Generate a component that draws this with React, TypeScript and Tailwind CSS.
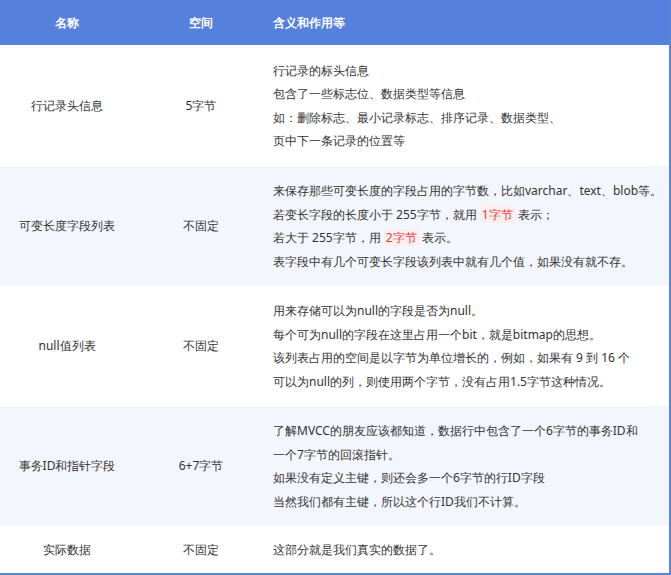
const rows: { name: string; size: string; lines: React.ReactNode[]; h: string; bg: string }[] = [
  {
    name: "行记录头信息",
    size: "5字节",
    h: "h-[121px]",
    bg: "bg-white",
    lines: ["行记录的标头信息", "包含了一些标志位、数据类型等信息", "如：删除标志、最小记录标志、排序记录、数据类型、", "页中下一条记录的位置等"],
  },
  {
    name: "可变长度字段列表",
    size: "不固定",
    h: "h-[120px]",
    bg: "bg-[#f3f6fc]",
    lines: [
      "来保存那些可变长度的字段占用的字节数，比如varchar、text、blob等。",
      <>若变长字段的长度小于 255字节，就用 <Red>1字节</Red> 表示；</>,
      <>若大于 255字节，用 <Red>2字节</Red> 表示。</>,
      "表字段中有几个可变长字段该列表中就有几个值，如果没有就不存。",
    ],
  },
  {
    name: "null值列表",
    size: "不固定",
    h: "h-[120px]",
    bg: "bg-white",
    lines: [
      "用来存储可以为null的字段是否为null。",
      "每个可为null的字段在这里占用一个bit，就是bitmap的思想。",
      "该列表占用的空间是以字节为单位增长的，例如，如果有 9 到 16 个",
      "可以为null的列，则使用两个字节，没有占用1.5字节这种情况。",
    ],
  },
  {
    name: "事务ID和指针字段",
    size: "6+7字节",
    h: "h-[120px]",
    bg: "bg-[#f3f6fc]",
    lines: [
      "了解MVCC的朋友应该都知道，数据行中包含了一个6字节的事务ID和",
      "一个7字节的回滚指针。",
      "如果没有定义主键，则还会多一个6字节的行ID字段",
      "当然我们都有主键，所以这个行ID我们不计算。",
    ],
  },
  {
    name: "实际数据",
    size: "不固定",
    h: "h-[47px]",
    bg: "bg-white",
    lines: ["这部分就是我们真实的数据了。"],
  },
];

function Red({ children }: { children: React.ReactNode }) {
  return <span className="bg-[#fdeeee] text-[#e0383e] px-[2px] rounded-sm">{children}</span>;
}

export default function App() {
  return (
    <div className="w-[671px] h-[575px] bg-white text-[12px] text-[#333] font-['Inter','Noto_Sans_CJK_SC',sans-serif] border-r-2 border-b-2 border-[#5a83dc] overflow-hidden">
      <div className="flex h-[45px] items-center bg-[#5580dc] text-white font-bold">
        <div className="w-[134px] text-center">名称</div>
        <div className="w-[134px] text-center">空间</div>
        <div className="flex-1 pl-[5px]">含义和作用等</div>
      </div>
      {rows.map((r) => (
        <div key={r.name} className={`flex items-center ${r.h} ${r.bg}`}>
          <div className="w-[134px] text-center">{r.name}</div>
          <div className="w-[134px] text-center">{r.size}</div>
          <div className="flex-1 pl-[5px] leading-[23.5px] whitespace-nowrap">
            {r.lines.map((l, i) => (
              <div key={i}>{l}</div>
            ))}
          </div>
        </div>
      ))}
    </div>
  );
}
